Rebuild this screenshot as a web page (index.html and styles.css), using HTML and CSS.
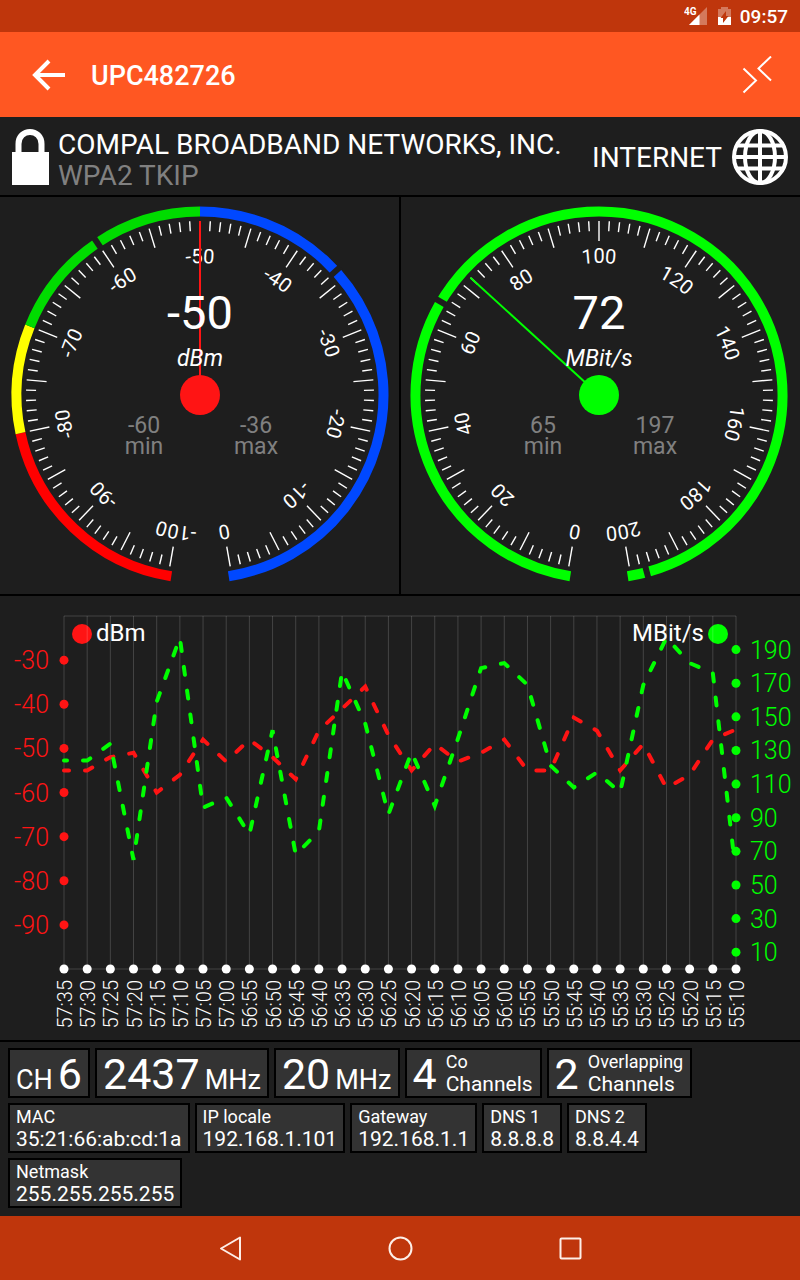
FILE: index.html
```html
<!DOCTYPE html>
<html lang="en">
<head>
<meta charset="utf-8">
<meta name="viewport" content="width=device-width, initial-scale=1">
<title>UPC482726</title>
<link rel="stylesheet" href="styles.css">
</head>
<body>
<div class="statusbar">
  <svg class="signal" viewBox="0 0 24 20" width="24" height="20" aria-hidden="true">
    <path class="dim" d="M23 1v18H5z"/>
    <path d="M15.500 8.500V19H5z"/>
    <text x="0" y="9">4G</text>
  </svg>
  <svg class="battery" viewBox="0 0 13 20" width="13" height="20" aria-hidden="true">
    <path class="dim" d="M0 11V3h3V1h7v2h3v8z"/>
    <path d="M0 11h13v8H0z"/>
    <path class="bolt" d="M8 5v5h2.500L5 17v-5H2.500z"/>
  </svg>
  <span class="time">09:57</span>
</div>
<header class="appbar">
  <button class="iconbtn" aria-label="Back">
    <svg viewBox="0 0 34 32" width="34" height="32"><path class="back" d="M17 2 3 16l14 14M3 16h30"/></svg>
  </button>
  <h1>UPC482726</h1>
  <button class="iconbtn" aria-label="Collapse">
    <svg viewBox="0 1 30 38" width="30" height="38"><path class="collapse" d="M1.500 13.500 14 25.500 1.500 37.500M29 1.500 16.500 13.500 29 25.500"/></svg>
  </button>
</header>
<main>
  <section class="network">
    <svg class="lock" viewBox="0 0 37 56" width="37" height="56" aria-hidden="true">
      <path class="shackle" d="M6.500 25V15c0-16 23-16 23 0v10"/>
      <path class="lockbody" d="M0 23h37v33H0z"/>
    </svg>
    <div class="names">
      <div>COMPAL BROADBAND NETWORKS, INC.</div>
      <div class="muted">WPA2 TKIP</div>
    </div>
    <div class="internet">INTERNET</div>
    <svg class="globe" viewBox="0 0 56 56" width="56" height="56" aria-hidden="true">
      <circle cx="28" cy="28" r="26"/>
      <ellipse cx="28" cy="28" rx="15" ry="26"/>
      <path d="M28 2v52M2 28h52M5 16.500h46M5 39.500h46"/>
    </svg>
  </section>
  <section class="gauges">
    <svg class="gauge" id="signal-gauge" viewBox="0 0 399 397" role="img" aria-label="Signal strength"></svg>
    <svg class="gauge" id="speed-gauge" viewBox="0 0 399 397" role="img" aria-label="Link speed"></svg>
  </section>
  <section class="history">
    <svg class="chart" id="chart" viewBox="0 0 800 444" role="img" aria-label="Signal and speed history"></svg>
  </section>
  <section class="details">
    <div class="row">
      <div class="chip big"><span class="unit">CH</span><span class="num">6</span></div>
      <div class="chip big"><span class="num">2437</span><span class="unit">MHz</span></div>
      <div class="chip big"><span class="num">20</span><span class="unit">MHz</span></div>
      <div class="chip count"><span class="num">4</span><div class="pair"><div class="label">Co</div><div class="value">Channels</div></div></div>
      <div class="chip count"><span class="num">2</span><div class="pair"><div class="label">Overlapping</div><div class="value">Channels</div></div></div>
    </div>
    <div class="row">
      <div class="chip pair"><div class="label">MAC</div><div class="value">35:21:66:ab:cd:1a</div></div>
      <div class="chip pair"><div class="label">IP locale</div><div class="value">192.168.1.101</div></div>
      <div class="chip pair"><div class="label">Gateway</div><div class="value">192.168.1.1</div></div>
      <div class="chip pair"><div class="label">DNS 1</div><div class="value">8.8.8.8</div></div>
      <div class="chip pair"><div class="label">DNS 2</div><div class="value">8.8.4.4</div></div>
      <div class="chip pair"><div class="label">Netmask</div><div class="value">255.255.255.255</div></div>
    </div>
  </section>
</main>
<nav class="navbar">
  <button class="iconbtn" aria-label="Back"><svg viewBox="0 0 26 26" width="26" height="26"><path d="M23 2.500v22L4 13.500z"/></svg></button>
  <button class="iconbtn" aria-label="Home"><svg viewBox="0 0 26 26" width="26" height="26"><circle cx="13.500" cy="13.500" r="11"/></svg></button>
  <button class="iconbtn" aria-label="Recent apps"><svg viewBox="0 0 26 26" width="26" height="26"><rect x="3.500" y="3.500" width="20" height="20" rx="1"/></svg></button>
</nav>
<script src="script.js"></script>
</body>
</html>
```
FILE: styles.css
```css
* { box-sizing: border-box; }
body {
  margin: 0;
  min-height: 100vh;
  display: flex;
  flex-direction: column;
  background: #1e1e1e;
  color: #fff;
  font-family: Roboto, "Liberation Sans", sans-serif;
}
svg { display: block; flex: none; }
.iconbtn {
  padding: 0;
  border: 0;
  background: none;
  color: inherit;
  display: block;
}

.statusbar {
  height: 32px;
  padding: 0 12px;
  display: flex;
  align-items: center;
  justify-content: flex-end;
  background: #bf360c;
}
.statusbar svg { fill: #fff; }
.statusbar .dim { fill: #d4795c; }
.statusbar .bolt { fill: #bf360c; }
.signal text { font-size: 10px; font-weight: 700; }
.battery { margin: 0 9px 0 10px; }
.time { padding-top: 1px; font-size: 19px; font-weight: 500; line-height: 31px; }

.appbar {
  height: 85px;
  padding: 0 28px 0 32px;
  display: flex;
  align-items: center;
  background: #ff5722;
}
.appbar h1 {
  flex: 1;
  margin: 0 0 0 25px;
  padding-top: 2px;
  font-size: 27px;
  font-weight: 500;
  line-height: 32px;
}
.appbar path { fill: none; stroke: #fff; }
.appbar .back { stroke-width: 4; }
.appbar .collapse { stroke-width: 2; }

main { flex: 1; }
.network {
  padding: 6px 12px 4px;
  display: flex;
  align-items: center;
  gap: 10px;
  border-bottom: 2px solid #000;
  font-size: 28px;
  line-height: 31px;
}
.names { flex: 1; margin-left: -1px; padding-top: 6px; }
.muted { color: #808080; }
.shackle { fill: none; stroke: #fff; stroke-width: 6; }
.lockbody { fill: #fff; }
.globe { fill: none; stroke: #fff; stroke-width: 4; }

.gauges {
  display: grid;
  grid-template-columns: 1fr 1fr;
  gap: 2px;
  background: #000;
  border-bottom: 2px solid #000;
}
.gauge { width: 100%; background: #1e1e1e; fill: #fff; text-anchor: middle; }
.ring { fill: none; stroke-width: 10; }
.notch { stroke: #1e1e1e; stroke-width: 6; }
.tick { stroke: #fff; stroke-width: 1.4; }
.track { fill: none; }
.scale { font-size: 20px; }
.needle { stroke-width: 2; }
.reading { font-size: 47px; }
.measure { font-size: 23px; font-style: italic; }
.extreme { font-size: 23px; fill: #808080; }

.history { border-bottom: 2px solid #000; }
.chart { width: 100%; }
.grid { stroke: #fff; stroke-opacity: 0.17; stroke-width: 1; }
.series { fill: none; stroke-width: 4; stroke-linecap: round; stroke-dasharray: 8 16; }
.axis { font-size: 25px; font-weight: 300; }
.times { font-size: 20px; font-weight: 300; fill: #fff; text-anchor: end; }
.legend { font-size: 24px; fill: #fff; }
.end { text-anchor: end; }

.details {
  padding: 6px 8px 8px;
  display: grid;
  gap: 5px;
}
.row { display: flex; flex-wrap: wrap; gap: 5px; }
.chip {
  height: 50px;
  padding: 0 6px;
  border: 2px solid #000;
  background: #333;
}
.big { display: flex; align-items: baseline; gap: 5px; line-height: 48px; }
.count { display: flex; gap: 9px; padding-right: 7px; line-height: 48px; }
.num { font-size: 43px; }
.unit { font-size: 27px; }
.pair { padding-top: 1px; line-height: 22px; }
.label { font-size: 18px; }
.value { font-size: 21px; }

.navbar {
  height: 64px;
  display: flex;
  align-items: center;
  justify-content: center;
  gap: 144px;
  background: #bf360c;
}
.navbar svg { fill: none; stroke: #fdeee8; stroke-width: 2; stroke-linejoin: round; }
```
FILE: script.js
```js
const NS = 'http://www.w3.org/2000/svg';
const RED = '#ff1414';
const GREEN = '#00ff00';

function add(parent, name, attrs, text) {
  const node = document.createElementNS(NS, name);
  for (const key in attrs) node.setAttribute(key, attrs[key]);
  if (text !== undefined) node.textContent = text;
  parent.appendChild(node);
  return node;
}

function gauge(id, o) {
  const svg = document.getElementById(id);
  const cx = o.cx, cy = 198;
  const angle = v => ((v - o.from) / (o.to - o.from) - 0.5) * 340;
  const point = (a, r) => {
    const t = a * Math.PI / 180;
    return [cx + r * Math.sin(t), cy - r * Math.cos(t)];
  };
  const radial = (a, r1, r2, cls, extra) => {
    const p = point(a, r1), q = point(a, r2);
    return add(svg, 'line', Object.assign({ x1: p[0], y1: p[1], x2: q[0], y2: q[1], class: cls }, extra));
  };

  for (const [a, b, color] of o.ring) {
    const large = b - a > 180 ? 1 : 0;
    add(svg, 'path', { class: 'ring', stroke: color, d: `M${point(a, 183.5)}A183.5 183.5 0 ${large} 1 ${point(b, 183.5)}` });
  }
  radial(angle(o.min), 177, 190, 'notch');
  radial(angle(o.max), 177, 190, 'notch');

  for (let i = 0; i <= 100; i++) radial(i * 3.4 - 170, 174, i % 5 ? 164 : 154, 'tick');

  add(svg, 'path', { id: id + '-track', class: 'track', d: `M${cx} ${cy + 132}A132 132 0 0 1 ${cx} ${cy - 132}A132 132 0 0 1 ${cx} ${cy + 132}` });
  for (let i = 0; i <= 10; i++) {
    const v = o.from + (o.to - o.from) * i / 10;
    const text = add(svg, 'text', { class: 'scale', transform: `rotate(${angle(v)} ${cx} ${cy})` });
    add(text, 'textPath', { href: `#${id}-track`, startOffset: '50%' }, v);
  }

  radial(angle(o.value), 0, 174, 'needle', { stroke: o.color });
  add(svg, 'circle', { cx, cy, r: 20, fill: o.color });
  add(svg, 'text', { x: cx, y: 132, class: 'reading' }, o.value);
  add(svg, 'text', { x: cx, y: 169, class: 'measure' }, o.unit);
  [[-56, o.min, 'min'], [56, o.max, 'max']].forEach(([dx, v, name]) => {
    const text = add(svg, 'text', { class: 'extreme' });
    add(text, 'tspan', { x: cx + dx, y: 236 }, v);
    add(text, 'tspan', { x: cx + dx, y: 257 }, name);
  });
}

gauge('signal-gauge', {
  cx: 200, from: -100, to: 0, value: -50, min: -60, max: -36, unit: 'dBm', color: RED,
  ring: [[-171, -102, '#ff0000'], [-102, -68, '#ffff00'], [-68, 0, '#00dc00'], [0, 171, '#0048ff']]
});
gauge('speed-gauge', {
  cx: 198, from: 0, to: 200, value: 72, min: 65, max: 197, unit: 'MBit/s', color: GREEN,
  ring: [[-171, 171, GREEN]]
});

const dbm = [-55, -55, -52, -51, -60, -56, -48, -53, -48, -52, -57, -46, -41, -36, -47,
  -55, -49, -53, -51, -48, -55, -55, -43, -46, -55, -49, -59, -56, -48, -46];
const mbit = [124, 124, 134, 65, 159, 197, 96, 102, 80, 142, 68, 82, 177, 146, 92,
  129, 97, 137, 179, 182, 169, 121, 108, 117, 105, 169, 197, 182, 176, 72];

const chart = document.getElementById('chart');
const LEFT = 64, RIGHT = 736, TOP = 20, BOTTOM = 373;
const step = (RIGHT - LEFT) / 29;
const yDbm = v => BOTTOM - (v + 100) * (BOTTOM - TOP) / 80;
const yMbit = v => BOTTOM - v * (BOTTOM - TOP) / 210;
// The newest sample lies just before the right axis.
const xAt = i => i === 29 ? 733 : LEFT + i * step;

add(chart, 'circle', { cx: 82, cy: 38, r: 10, fill: RED });
add(chart, 'circle', { cx: 718, cy: 38, r: 10, fill: GREEN });
for (const y of [TOP, BOTTOM]) add(chart, 'line', { x1: LEFT, x2: RIGHT, y1: y, y2: y, class: 'grid' });
for (let i = 0; i < 30; i++) add(chart, 'line', { x1: LEFT + i * step, x2: LEFT + i * step, y1: TOP, y2: BOTTOM, class: 'grid' });

add(chart, 'polyline', { class: 'series', stroke: RED, 'stroke-dashoffset': 3, points: dbm.map((v, i) => [xAt(i), yDbm(v)]).join(' ') });
add(chart, 'polyline', { class: 'series', stroke: GREEN, 'stroke-dashoffset': 5, points: mbit.map((v, i) => [xAt(i), yMbit(v)]).join(' ') });

for (let v = -30; v >= -90; v -= 10) {
  add(chart, 'circle', { cx: LEFT, cy: yDbm(v), r: 4.5, fill: RED });
  add(chart, 'text', { x: 49, y: yDbm(v) + 9, fill: RED, class: 'axis end' }, v);
}
for (let v = 190; v >= 10; v -= 20) {
  add(chart, 'circle', { cx: RIGHT, cy: yMbit(v), r: 4.5, fill: GREEN });
  add(chart, 'text', { x: 750, y: yMbit(v) + 9, fill: GREEN, class: 'axis' }, v);
}
for (let i = 0; i < 30; i++) {
  const x = LEFT + i * step;
  const seconds = 57 * 60 + 35 - i * 5;
  const label = Math.floor(seconds / 60) + ':' + String(seconds % 60).padStart(2, '0');
  add(chart, 'circle', { cx: x, cy: BOTTOM, r: 4.5, fill: '#fff' });
  add(chart, 'text', { transform: `translate(${x + 8} ${BOTTOM + 11}) rotate(-90)`, class: 'times' }, label);
}
add(chart, 'text', { x: 96, y: 45, class: 'legend' }, 'dBm');
add(chart, 'text', { x: 704, y: 45, class: 'legend end' }, 'MBit/s');
```
